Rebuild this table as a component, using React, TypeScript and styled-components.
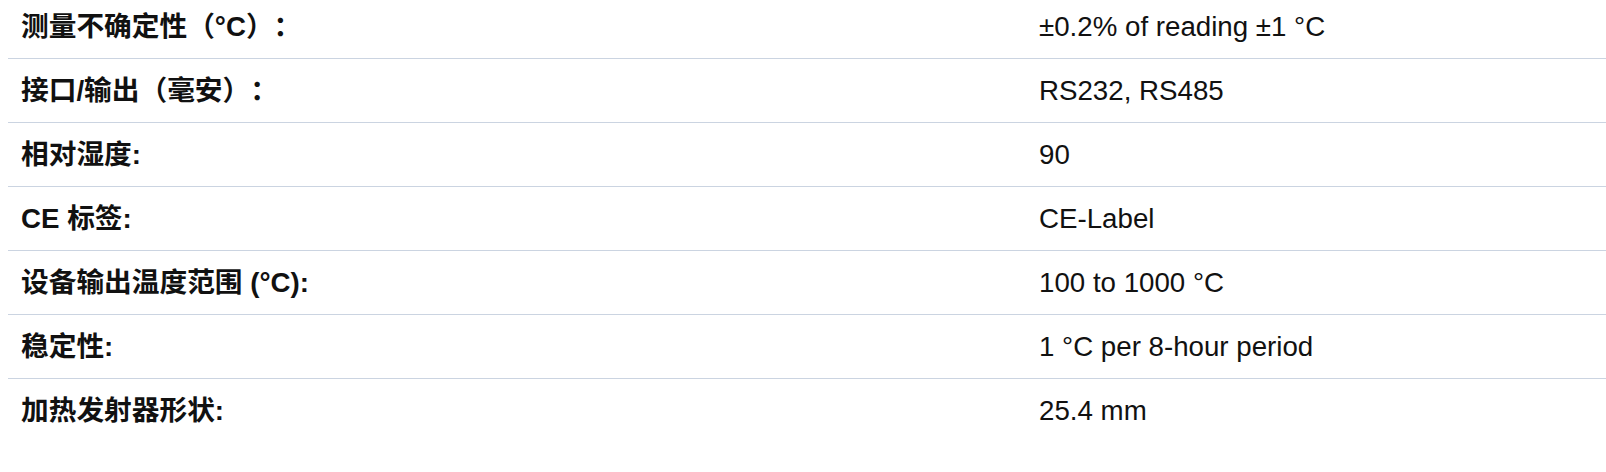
import React from "react";
import styled, { createGlobalStyle } from "styled-components";

const Global = createGlobalStyle`
  html, body { background: #ffffff; }
  body {
    margin: 0 0 0 8px;
    font-family: "Liberation Sans", "Noto Sans CJK SC", Arial, sans-serif;
    color: #111111;
    overflow: hidden;
    text-spacing-trim: space-all;
  }
`;

const Table = styled.div`
  display: flex;
  flex-direction: column;
  margin-top: -5px;
  width: calc(100% + 8px);
`;

const Row = styled.div<{ $last?: boolean }>`
  display: grid;
  grid-template-columns: 1017px 1fr;
  align-items: center;
  height: 64px;
  box-sizing: border-box;
  border-bottom: ${(p) => (p.$last ? "none" : "1px solid #cbd4e1")};
`;

const Label = styled.div`
  padding: 0 14px 0 13px;
  font-size: 27.7px;
  line-height: 32px;
  font-weight: 700;
  color: #111111;
  white-space: nowrap;
  text-spacing-trim: space-all;
`;

const Value = styled.div`
  padding: 0 14px;
  font-size: 27.7px;
  line-height: 32px;
  font-weight: 400;
  color: #111111;
  white-space: nowrap;
`;

const rows: [string, string][] = [
  ["测量不确定性（°C）：", "±0.2% of reading ±1 °C"],
  ["接口/输出（毫安）：", "RS232, RS485"],
  ["相对湿度:", "90"],
  ["CE 标签:", "CE-Label"],
  ["设备输出温度范围 (°C):", "100 to 1000 °C"],
  ["稳定性:", "1 °C per 8-hour period"],
  ["加热发射器形状:", "25.4 mm"],
];

export default function App() {
  return (
    <>
      <Global />
      <Table>
        {rows.map(([k, v], i) => (
          <Row key={k} $last={i === rows.length - 1}>
            <Label>{k}</Label>
            <Value>{v}</Value>
          </Row>
        ))}
      </Table>
    </>
  );
}
